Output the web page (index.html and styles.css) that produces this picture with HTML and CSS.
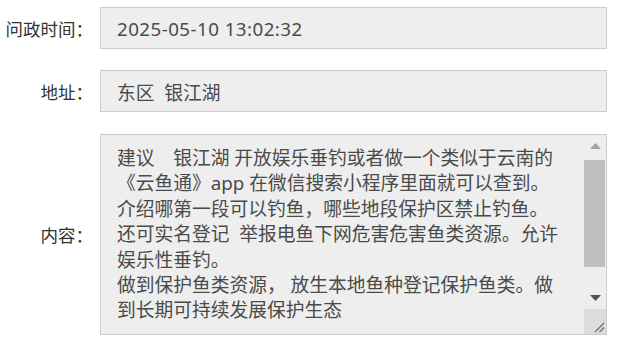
FILE: index.html
```html
<!DOCTYPE html>
<html lang="zh-CN">
<head>
<meta charset="utf-8">
<link rel="stylesheet" href="styles.css">
</head>
<body>
<div class="form">
  <div class="row">
    <label class="label">问政时间：</label>
    <div class="control control-date">2025-05-10 13:02:32</div>
  </div>
  <div class="row">
    <label class="label">地址：</label>
    <div class="control">东区&nbsp;&nbsp;银江湖</div>
  </div>
  <div class="row row-last">
    <label class="label">内容：</label>
    <div class="area">
      <div class="area-text">
        <div class="line">建议　银江湖 开放娱乐垂钓或者做一个类似于云南的</div>
        <div class="line">《云鱼通》app 在微信搜索小程序里面就可以查到。</div>
        <div class="line">介绍哪第一段可以钓鱼，哪些地段保护区禁止钓鱼。</div>
        <div class="line">还可实名登记&nbsp; 举报电鱼下网危害危害鱼类资源。允许</div>
        <div class="line">娱乐性垂钓。</div>
        <div class="line">做到保护鱼类资源， 放生本地鱼种登记保护鱼类。做</div>
        <div class="line">到长期可持续发展保护生态</div>
      </div>
      <div class="scrollbar">
        <div class="sb-btn">
          <svg width="11" height="6" viewBox="0 0 11 6"><polygon points="0,6 11,6 5.5,0" fill="#a3a3a3"/></svg>
        </div>
        <div class="sb-track"><div class="sb-thumb"></div></div>
        <div class="sb-btn">
          <svg width="11" height="6" viewBox="0 0 11 6"><polygon points="0,0 11,0 5.5,6" fill="#505050"/></svg>
        </div>
        <div class="sb-corner">
          <svg width="12" height="12" viewBox="0 0 12 12"><line x1="11" y1="2" x2="2" y2="11" stroke="#6f6f6f" stroke-width="1.2"/><line x1="11" y1="6.5" x2="6.5" y2="11" stroke="#6f6f6f" stroke-width="1.2"/></svg>
        </div>
      </div>
    </div>
  </div>
</div>
</body>
</html>
```

FILE: styles.css
```css
html, body {
  margin: 0;
  padding: 0;
  background: #fff;
}

body {
  font-family: "Noto Sans", "Noto Sans CJK SC", sans-serif;
  width: 640px;
  height: 345px;
  overflow: hidden;
}

.form {
  display: flex;
  flex-direction: column;
  padding-top: 7px;
}

.row {
  display: flex;
  align-items: center;
}

.row + .row {
  margin-top: 21px;
}

.row-last {
  margin-top: 22px !important;
}

.label {
  flex: none;
  width: 93px;
  margin-right: 7px;
  text-align: right;
  font-size: 17.5px;
  color: #333;
  white-space: nowrap;
}

.control {
  flex: none;
  box-sizing: border-box;
  width: 507px;
  height: 42px;
  border: 1px solid #ccc;
  background: #eee;
  color: #4a4a4a;
  font-size: 18.75px;
  padding: 0 16px;
  display: flex;
  align-items: center;
  white-space: nowrap;
}

.control-date {
  letter-spacing: 0.45px;
}

.area {
  flex: none;
  box-sizing: border-box;
  width: 507px;
  height: 201px;
  border: 1px solid #ccc;
  background: #eee;
  display: flex;
}

.area-text {
  flex: 1;
  overflow: hidden;
  padding: 10px 0 0 16px;
  color: #4a4a4a;
  font-size: 18.75px;
  line-height: 25.4px;
  white-space: nowrap;
}

.scrollbar {
  flex: none;
  width: 22px;
  display: flex;
  flex-direction: column;
  background: #eee;
}

.sb-btn {
  flex: none;
  height: 22px;
  display: flex;
  align-items: center;
  justify-content: center;
}

.sb-track {
  flex: 1;
  display: flex;
  flex-direction: column;
}

.sb-thumb {
  margin-top: 3px;
  width: 21px;
  height: 107px;
  background: #bfbfbf;
}

.sb-corner {
  flex: none;
  height: 25px;
  background: #dcdcdc;
  display: flex;
  align-items: flex-end;
  justify-content: flex-end;
  padding: 0 1px 1px 0;
  box-sizing: border-box;
}
```
